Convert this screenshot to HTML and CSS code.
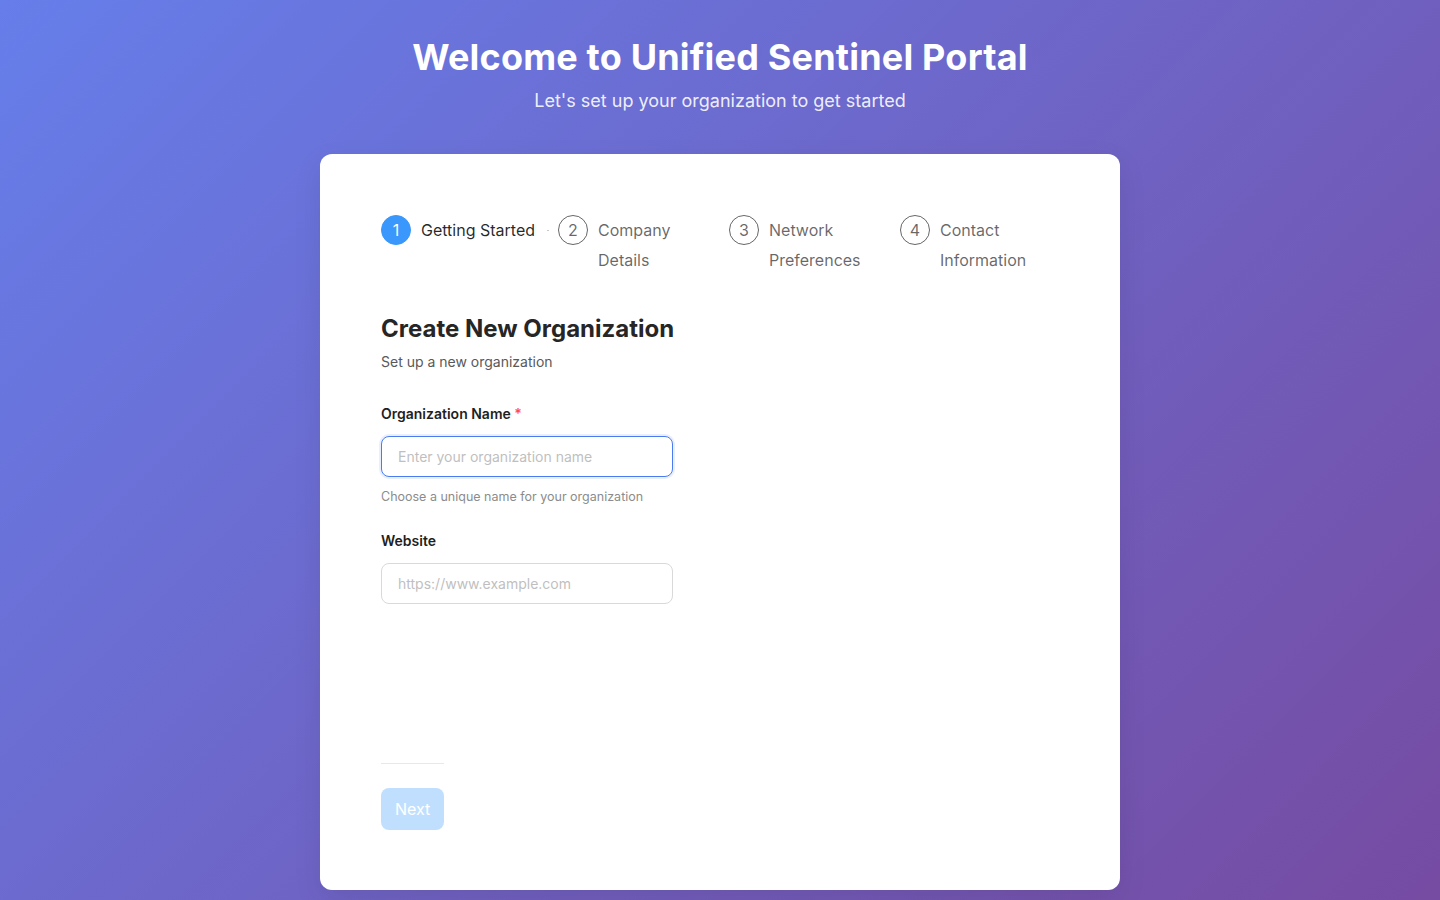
FILE: index.html
```html
<!DOCTYPE html>
<html lang="en">
<head>
<meta charset="utf-8">
<title>Unified Sentinel Portal</title>
<link rel="stylesheet" href="styles.css">
</head>
<body>
<div class="page">
  <header class="hero">
    <h1 class="hero-title">Welcome to Unified Sentinel Portal</h1>
    <p class="hero-sub">Let's set up your organization to get started</p>
  </header>
  <main class="card">
    <div class="steps">
      <div class="step step-active step-first">
        <span class="step-icon">1</span>
        <span class="step-title">Getting Started</span>
      </div>
      <div class="step">
        <span class="step-icon">2</span>
        <span class="step-title">Company Details</span>
      </div>
      <div class="step">
        <span class="step-icon">3</span>
        <span class="step-title">Network Preferences</span>
      </div>
      <div class="step step-last">
        <span class="step-icon">4</span>
        <span class="step-title">Contact Information</span>
      </div>
    </div>
    <section class="form-body">
      <h2 class="form-title">Create New Organization</h2>
      <p class="form-sub">Set up a new organization</p>
      <div class="field">
        <label class="field-label">Organization Name <span class="req">*</span></label>
        <input class="field-input field-input-focus" type="text" placeholder="Enter your organization name">
        <div class="field-help">Choose a unique name for your organization</div>
      </div>
      <div class="field">
        <label class="field-label">Website</label>
        <input class="field-input" type="text" placeholder="https://www.example.com">
      </div>
    </section>
    <div class="actions">
      <button class="btn-next" disabled>Next</button>
    </div>
  </main>
</div>
</body>
</html>
```

FILE: styles.css
```css
* { box-sizing: border-box; }
html, body { margin: 0; padding: 0; }
body {
  font-family: Inter, "Noto Sans", "Liberation Sans", sans-serif;
  background: linear-gradient(135deg, #667eea 0%, #764ba2 100%);
  min-height: 100vh;
}
.page {
  padding: 35px 0 10px;
}
.hero {
  text-align: center;
  color: #fff;
}
.hero-title {
  margin: 0;
  font-size: 36px;
  line-height: 44px;
  font-weight: 700;
  letter-spacing: 0.2px;
}
.hero-sub {
  margin: 11px 0 0;
  font-size: 18px;
  line-height: 22px;
  color: rgba(255,255,255,0.9);
}
.card {
  width: 800px;
  margin: 42px auto 0;
  background: #fff;
  border-radius: 12px;
  padding: 61px 60px 60px 61px;
  box-shadow: 0 10px 30px rgba(0,0,0,0.08);
}
.steps {
  display: flex;
  align-items: flex-start;
}
.step {
  display: flex;
  align-items: flex-start;
  overflow: hidden;
  width: 171px;
  padding-left: 9px;
  flex: none;
}
.step-first { width: 168px; padding-left: 0; }
.step-last { flex: 1; width: auto; }
.step-icon {
  flex: none;
  width: 30px;
  height: 30px;
  border-radius: 50%;
  border: 1px solid rgba(0,0,0,0.6);
  color: rgba(0,0,0,0.6);
  font-size: 16px;
  line-height: 28px;
  text-align: center;
  margin-right: 10px;
}
.step-active .step-icon {
  background: #3a97fb;
  border-color: #3a97fb;
  color: #fff;
}
.step-title {
  position: relative;
  display: inline-block;
  padding-right: 12px;
  font-size: 16px;
  line-height: 30px;
  color: rgba(0,0,0,0.6);
}
.step-active .step-title { color: rgba(0,0,0,0.85); }
.step-title::after {
  content: "";
  position: absolute;
  top: 15px;
  left: 100%;
  width: 9999px;
  height: 1px;
  background: #c8c8c8;
}
.step-last .step-title::after { display: none; }

.form-body {
  min-height: 450px;
  margin-top: 38px;
}
.form-title {
  margin: 0;
  font-size: 24px;
  line-height: 32px;
  font-weight: 700;
  color: #262626;
}
.form-sub {
  margin: 6px 0 0;
  font-size: 14px;
  line-height: 22px;
  color: #595959;
}
.field { margin-top: 30px; width: 292px; }
.field + .field { margin-top: 23px; }
.field-label {
  display: block;
  font-size: 14px;
  line-height: 22px;
  font-weight: 600;
  color: #1f1f1f;
  margin-bottom: 11px;
}
.req { color: #ff4d4f; }
.field-input {
  display: block;
  width: 292px;
  height: 41px;
  padding: 0 16px;
  border: 1px solid #d9d9d9;
  border-radius: 8px;
  font-family: inherit;
  font-size: 14px;
  color: #262626;
  outline: none;
  background: #fff;
}
.field-input::placeholder { color: #bfbfbf; }
.field-input-focus {
  border-color: #4a7cf0;
  box-shadow: 0 0 0 2px rgba(80,120,255,0.12);
}
.field-help {
  margin-top: 10px;
  font-size: 12.5px;
  line-height: 20px;
  color: #8c8c8c;
}
.actions {
  display: inline-block;
  border-top: 1px solid #e8e8e8;
  padding-top: 24px;
}
.btn-next {
  display: block;
  height: 42px;
  padding: 0 14px;
  border: none;
  border-radius: 8px;
  background: #c0dfff;
  color: #fff;
  font-family: inherit;
  font-size: 16px;
}
```
